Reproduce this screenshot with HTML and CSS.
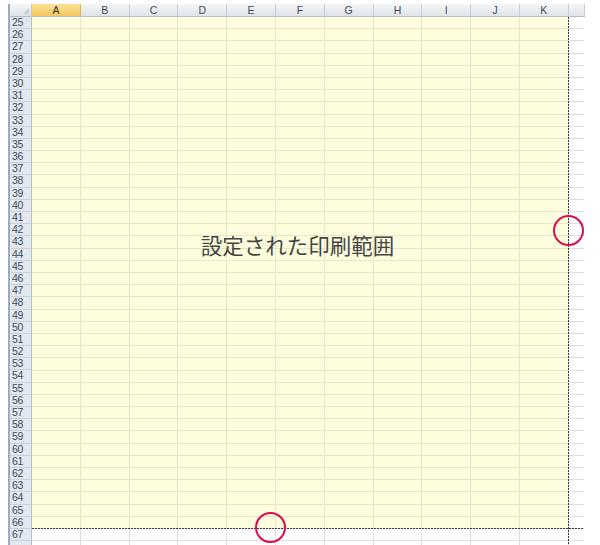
FILE: index.html
```html
<!DOCTYPE html>
<html lang="ja">
<head>
    <meta charset="utf-8">
    <title>印刷範囲</title>
    <link rel="stylesheet" href="styles.css">
</head>
<body>
    <div class="sheet">
        <div class="corner"><span class="corner-mark"></span></div>

        <div class="col-heads">
            <div class="col-head active">A</div>
            <div class="col-head">B</div>
            <div class="col-head">C</div>
            <div class="col-head">D</div>
            <div class="col-head">E</div>
            <div class="col-head">F</div>
            <div class="col-head">G</div>
            <div class="col-head">H</div>
            <div class="col-head">I</div>
            <div class="col-head">J</div>
            <div class="col-head">K</div>
            <div class="col-head"></div>
        </div>

        <div class="row-heads">
            <div class="row-head">25</div>
            <div class="row-head">26</div>
            <div class="row-head">27</div>
            <div class="row-head">28</div>
            <div class="row-head">29</div>
            <div class="row-head">30</div>
            <div class="row-head">31</div>
            <div class="row-head">32</div>
            <div class="row-head">33</div>
            <div class="row-head">34</div>
            <div class="row-head">35</div>
            <div class="row-head">36</div>
            <div class="row-head">37</div>
            <div class="row-head">38</div>
            <div class="row-head">39</div>
            <div class="row-head">40</div>
            <div class="row-head">41</div>
            <div class="row-head">42</div>
            <div class="row-head">43</div>
            <div class="row-head">44</div>
            <div class="row-head">45</div>
            <div class="row-head">46</div>
            <div class="row-head">47</div>
            <div class="row-head">48</div>
            <div class="row-head">49</div>
            <div class="row-head">50</div>
            <div class="row-head">51</div>
            <div class="row-head">52</div>
            <div class="row-head">53</div>
            <div class="row-head">54</div>
            <div class="row-head">55</div>
            <div class="row-head">56</div>
            <div class="row-head">57</div>
            <div class="row-head">58</div>
            <div class="row-head">59</div>
            <div class="row-head">60</div>
            <div class="row-head">61</div>
            <div class="row-head">62</div>
            <div class="row-head">63</div>
            <div class="row-head">64</div>
            <div class="row-head">65</div>
            <div class="row-head">66</div>
            <div class="row-head">67</div>
        </div>

        <div class="cells">
            <div class="print-area">
                <div class="print-label">設定された印刷範囲</div>
            </div>
            <!-- 改ページ線 -->
            <div class="break-v"></div>
            <div class="break-h"></div>
            <!-- 目印 -->
            <div class="mark mark-right"></div>
            <div class="mark mark-bottom"></div>
        </div>
    </div>
</body>
</html>
```

FILE: styles.css
```css
body {
    margin: 0;
    background: #fff;
    font-family: "Liberation Sans", Arial, sans-serif;
}

.sheet {
    margin: 4px 0 0 8px;
    width: 577px;
    height: 541px;
    display: grid;
    grid-template-columns: 24px 1fr;
    grid-template-rows: 13px 1fr;
    overflow: hidden;
}

.corner {
    background: linear-gradient(#f4f5f7, #dfe3e8);
    border-left: 2px solid #9aabc4;
    border-right: 1px solid #c3c9d2;
    border-bottom: 1px solid #b4bfcd;
    display: flex;
    justify-content: flex-end;
    align-items: flex-end;
    padding: 0 2px 2px 0;
}

.corner-mark {
    width: 0;
    height: 0;
    border-left: 6px solid transparent;
    border-bottom: 6px solid #c9ced6;
}

.col-heads {
    display: grid;
    grid-template-columns: repeat(11, 48.8px) 1fr;
    background: linear-gradient(#f4f5f7, #dfe3e8);
    border-bottom: 1px solid #b4bfcd;
}

.col-head {
    border-right: 1px solid #c9ced6;
    font-size: 10.5px;
    line-height: 12px;
    text-align: center;
    color: #3f4b5c;
}

.col-head.active {
    background: linear-gradient(#fbe29a, #f4c75a);
    border-right-color: #e2b34c;
    color: #333;
}

.row-heads {
    display: grid;
    grid-template-rows: repeat(43, 12.19px);
    background: #e3e8ef;
    border-left: 2px solid #9aabc4;
    border-right: 1px solid #b4bfcd;
}

.row-head {
    border-bottom: 1px solid #c8d0db;
    font-size: 10.5px;
    line-height: 11px;
    padding-left: 2px;
    color: #3f4b5c;
    letter-spacing: -0.4px;
}

.cells {
    position: relative;
    background-color: #fff;
    background-image:
        repeating-linear-gradient(to right, transparent 0 47.8px, #dedede 47.8px 48.8px),
        repeating-linear-gradient(to bottom, transparent 0 11.19px, #dedede 11.19px 12.19px);
    width: 552px;
}

.print-area {
    width: 537px;
    height: 512px;
    background-color: #fefede;
    background-image:
        repeating-linear-gradient(to right, transparent 0 47.8px, #e7e5c6 47.8px 48.8px),
        repeating-linear-gradient(to bottom, transparent 0 11.19px, #e7e5c6 11.19px 12.19px);
    display: flex;
    justify-content: center;
    padding-top: 216px;
    padding-right: 6px;
    box-sizing: border-box;
}

.print-label {
    font-family: "Noto Sans CJK JP", sans-serif;
    font-size: 21.5px;
    line-height: 24px;
    color: #444;
    height: 24px;
}

.break-v {
    position: absolute;
    left: 536px;
    top: 0;
    bottom: 0;
    width: 1px;
    background: repeating-linear-gradient(to bottom, #3a3a3a 0 2px, transparent 2px 3px);
}

.break-h {
    position: absolute;
    left: 0;
    right: 0;
    top: 511px;
    height: 1px;
    background: repeating-linear-gradient(to right, #3a3a3a 0 2px, transparent 2px 3px);
}

.mark {
    position: absolute;
    width: 27px;
    height: 27px;
    border: 2px solid #dc0a4b;
    border-radius: 50%;
}

.mark-right {
    left: 521px;
    top: 198px;
}

.mark-bottom {
    left: 223px;
    top: 495px;
}
```
